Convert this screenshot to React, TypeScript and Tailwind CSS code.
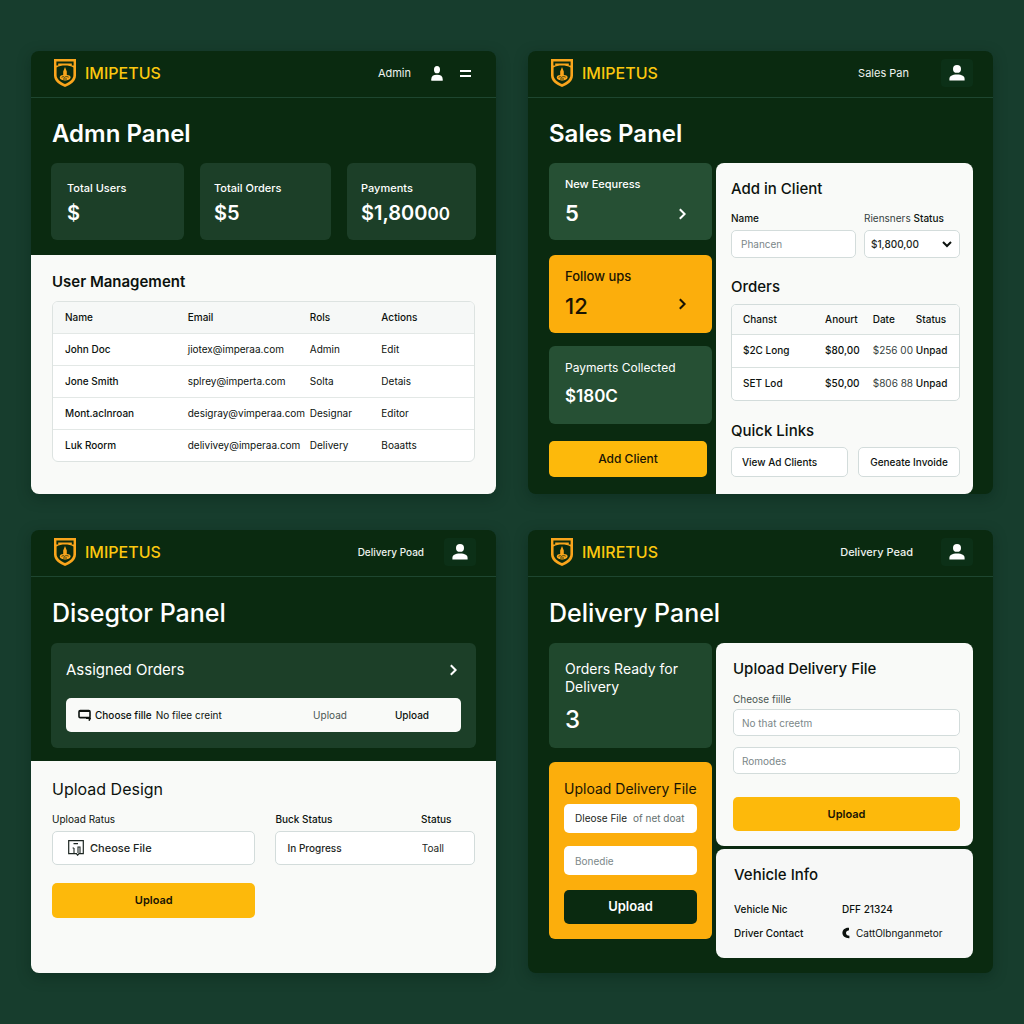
import React from "react";

const field =
  "w-full rounded-[5px] border border-[#d3dcdb] bg-white text-[10px] text-[#1c2622] placeholder:text-[#7b8789] outline-none";

function Shield() {
  return (
    <svg width="24" height="30" viewBox="0 0 24 30" aria-hidden="true">
      <path
        d="M1 1 H23 V17.5 C23 23 18 26.5 12 29 C6 26.5 1 23 1 17.5 Z"
        fill="#f9a51c"
      />
      <path
        d="M3.4 3.6 H20.6 V7.6 H18.8 V5.6 H5.2 V7.6 H3.4 Z"
        fill="#0a2a10"
      />
      <path
        d="M3.6 9.4 C8 7 16 7 20.4 9.4 V17 C20.4 21 17 23.8 12 26 C7 23.8 3.6 21 3.6 17 Z"
        fill="#0a2a10"
      />
      <path
        d="M12 9 L13.8 13.5 V17 C16.5 17 18 18.2 17.6 19.8 C17 22 14 22.6 11.6 22.4 C8.6 22.2 6.4 21 6.8 19 C7 17.8 8.4 17 10.2 17 V13.5 Z"
        fill="#f9a51c"
      />
      <path
        d="M8.6 19.4 C9.8 18.4 11 18.6 11.6 19.4 C12.4 18.4 14.6 18.4 15.6 19.2 M10 21 H14"
        fill="none"
        stroke="#0a2a10"
        strokeWidth="0.8"
      />
    </svg>
  );
}

function UserIcon({ small }: { small?: boolean }) {
  return (
    <svg
      className={small ? "h-[15px] w-3" : "h-4 w-4"}
      viewBox="0 0 16 16"
      preserveAspectRatio="none"
      fill="#fff"
      aria-hidden="true"
    >
      <ellipse cx="8" cy="3.9" rx="4" ry="3.9" />
      <path d="M0.4 15.6 V14 C0.4 11 3 9.4 8 9.4 S15.6 11 15.6 14 V15.6 Z" />
    </svg>
  );
}

function Chevron({ down }: { down?: boolean }) {
  return (
    <svg
      width="12"
      height="12"
      viewBox="0 0 12 12"
      fill="none"
      stroke="currentColor"
      strokeWidth="2"
      aria-hidden="true"
    >
      <path d={down ? "M2 4 L6 8 L10 4" : "M3.8 1.2 L8.6 6 L3.8 10.8"} />
    </svg>
  );
}

function Panel({
  brand = "IMIPETUS",
  user,
  title,
  titleStyle = "text-[24px] font-semibold",
  menu,
  children,
}: {
  brand?: string;
  user: React.ReactNode;
  title: string;
  titleStyle?: string;
  menu?: boolean;
  children: React.ReactNode;
}) {
  return (
    <section className="flex flex-col overflow-hidden rounded-lg bg-[#0a2a10] shadow-[0_4px_14px_rgba(4,30,18,0.35)]">
      <header className="flex h-[47px] items-center border-b border-[#1e4630] pb-[2px] pl-[22px] pr-5">
        <Shield />
        <span className="ml-2 text-[16px] font-medium text-[#fcc80f]">{brand}</span>
        <span className="ml-auto text-[11px] text-[#eef3ef]">{user}</span>
        {menu ? (
          <>
            <button aria-label="Account" className="ml-5">
              <UserIcon small />
            </button>
            <button aria-label="Menu" className="ml-[17px] mr-[5px] flex flex-col gap-[3px]">
              <span className="h-[2px] w-[11px] bg-white" />
              <span className="h-[2px] w-[11px] bg-white" />
            </button>
          </>
        ) : (
          <button
            aria-label="Account"
            className="ml-5 flex h-7 w-8 items-center justify-center rounded bg-[#0c3017]"
          >
            <UserIcon />
          </button>
        )}
      </header>
      <h1 className={`mt-5 px-[21px] leading-8 text-white ${titleStyle}`}>{title}</h1>
      {children}
    </section>
  );
}

const stats = [
  { label: "Total Users", value: "$", small: "" },
  { label: "Totail Orders", value: "$5", small: "" },
  { label: "Payments", value: "$1,800", small: "00" },
];

const users = [
  ["John Doc", "jiotex@imperaa.com", "Admin", "Edit"],
  ["Jone Smith", "splrey@imperta.com", "Solta", "Detais"],
  ["Mont.aclnroan", "desigray@vimperaa.com", "Designar", "Editor"],
  ["Luk Roorm", "delivivey@imperaa.com", "Delivery", "Boaatts"],
];

function AdminPanel() {
  return (
    <Panel user="Admin" title="Admn Panel" menu>
      <div className="mt-[13px] grid grid-cols-[133fr_131fr_129fr] gap-4 px-5">
        {stats.map((s) => (
          <div
            key={s.label}
            className="rounded-md bg-[#1c3f28] px-[14px] pb-[14px] pt-4 text-white first:px-4"
          >
            <div className="text-[11px] font-medium leading-[18px]">{s.label}</div>
            <div className="mt-1 text-[20px] font-semibold leading-6">
              {s.value}
              <span className="text-[17px]">{s.small}</span>
            </div>
          </div>
        ))}
      </div>
      <div className="mt-[15px] flex-1 bg-[#f9faf8] px-[21px] pb-8 pt-[15px] text-[#0c120e]">
        <h2 className="text-[15px] font-semibold leading-6">User Management</h2>
        <div className="mt-[7px] overflow-hidden rounded-md border border-[#dde3e1] bg-white">
          <table className="w-full table-fixed text-left text-[10px]">
            <colgroup>
              <col className="w-[32%]" />
              <col className="w-[29%]" />
              <col className="w-[17%]" />
              <col />
            </colgroup>
            <thead>
              <tr className="h-[31px] bg-[#f6f8f7]">
                {["Name", "Email", "Rols", "Actions"].map((h) => (
                  <th key={h} className="font-medium first:pl-3">
                    {h}
                  </th>
                ))}
              </tr>
            </thead>
            <tbody>
              {users.map((u) => (
                <tr key={u[0]} className="h-8 border-t border-[#e3e8e6]">
                  <td className="pl-3 font-medium">{u[0]}</td>
                  <td className="whitespace-nowrap">{u[1]}</td>
                  <td>{u[2]}</td>
                  <td>
                    <a href="#action">{u[3]}</a>
                  </td>
                </tr>
              ))}
            </tbody>
          </table>
        </div>
      </div>
    </Panel>
  );
}

function SalesPanel() {
  return (
    <Panel user={<span className="mr-3">Sales Pan</span>} title="Sales Panel">
      <div className="mt-[13px] grid flex-1 grid-cols-[163fr_257fr] gap-1 pl-[21px] pr-5">
        <div className="flex flex-col pb-4">
          <div className="flex h-[77px] items-center justify-between rounded-md bg-[#265034] pl-4 pr-6 text-white">
            <div>
              <div className="text-[11px] font-medium leading-[18px]">New Eequress</div>
              <div className="mt-1 text-[22px] font-semibold leading-8">5</div>
            </div>
            <button aria-label="Open requests" className="mt-6">
              <Chevron />
            </button>
          </div>
          <div className="mt-[15px] flex h-[78px] items-center justify-between rounded-md bg-[#fcae0c] pl-4 pr-6 text-[#191403]">
            <div>
              <div className="text-[13px] font-medium leading-5">Follow ups</div>
              <div className="mt-1 text-[22px] font-medium leading-8">12</div>
            </div>
            <button aria-label="Open follow ups" className="mt-5">
              <Chevron />
            </button>
          </div>
          <div className="mt-[13px] h-[78px] rounded-md bg-[#265034] px-4 pt-3 text-white">
            <div className="whitespace-nowrap text-[12px] leading-5">Paymerts Collected</div>
            <div className="mt-1 text-[17px] font-semibold leading-7">$180C</div>
          </div>
          <button className="mr-[5px] mt-[17px] h-9 rounded-[5px] bg-[#fdb90b] text-[12px] font-medium text-[#191403]">
            Add Client
          </button>
        </div>
        <div className="rounded-t-lg rounded-br-lg bg-[#f9faf8] pb-[17px] pl-[15px] pr-[13px] pt-4 text-[#0c120e]">
          <h2 className="text-[15px] font-medium leading-5">Add in Client</h2>
          <div className="mt-2 grid grid-cols-[125fr_96fr] gap-2">
            <div>
              <label htmlFor="client-name" className="block text-[10px] font-medium leading-[23px]">
                Name
              </label>
              <input id="client-name" placeholder="Phancen" className={`${field} block h-7 px-[9px]`} />
            </div>
            <div>
              <label
                htmlFor="client-status"
                className="block whitespace-nowrap text-[10px] leading-[23px] text-[#36423e]"
              >
                Riensners <span className="font-medium text-[#0c120e]">Status</span>
              </label>
              <div className="relative">
                <select
                  id="client-status"
                  className={`${field} block h-7 appearance-none pl-[6px] font-medium`}
                >
                  <option>$1,800,00</option>
                </select>
                <span className="pointer-events-none absolute right-[7px] top-2">
                  <Chevron down />
                </span>
              </div>
            </div>
          </div>
          <h2 className="mt-[19px] text-[15px] font-medium leading-5">Orders</h2>
          <div className="mt-[7px] overflow-hidden rounded-[5px] border border-[#d3dcdb] bg-white">
            <table className="w-full table-fixed whitespace-nowrap text-left text-[10px]">
              <colgroup>
                <col className="w-[41%]" />
                <col className="w-[21%]" />
                <col className="w-[19%]" />
                <col />
              </colgroup>
              <thead>
                <tr className="h-[29px] bg-[#f9faf9]">
                  <th className="pl-[11px] font-medium">Chanst</th>
                  <th className="font-medium">Anourt</th>
                  <th className="font-medium">Date</th>
                  <th className="font-medium">Status</th>
                </tr>
              </thead>
              <tbody>
                {[
                  ["$2C Long", "$80,00", "$256 00", "Unpad"],
                  ["SET Lod", "$50,00", "$806 88", "Unpad"],
                ].map((r) => (
                  <tr key={r[0]} className="h-[33px] border-t border-[#d9e1df] font-medium">
                    <td className="pl-[11px]">{r[0]}</td>
                    <td>{r[1]}</td>
                    <td className="font-normal text-[#36423e]">{r[2]}</td>
                    <td>{r[3]}</td>
                  </tr>
                ))}
              </tbody>
            </table>
          </div>
          <h2 className="mt-5 text-[15px] font-medium leading-5">Quick Links</h2>
          <div className="mt-[6px] grid grid-cols-[117fr_102fr] gap-[10px] text-[10px] font-medium">
            <a
              href="#clients"
              className="flex h-[30px] items-center whitespace-nowrap rounded-[5px] border border-[#d3dcdb] bg-white pl-[10px]"
            >
              View Ad Clients
            </a>
            <a
              href="#invoice"
              className="flex h-[30px] items-center justify-center whitespace-nowrap rounded-[5px] border border-[#d3dcdb] bg-white"
            >
              Geneate Invoide
            </a>
          </div>
        </div>
      </div>
    </Panel>
  );
}

function DesignerPanel() {
  return (
    <Panel
      user={<span className="text-[10px] font-medium">Delivery Poad</span>}
      title="Disegtor Panel"
      titleStyle="text-[25px] font-medium"
    >
      <div className="mx-5 mt-[14px] rounded-md bg-[#1c3f28] px-[15px] pb-4 pt-[15px]">
        <div className="flex items-center justify-between pr-[2px] text-white">
          <h2 className="text-[15px] leading-6">Assigned Orders</h2>
          <button aria-label="Open assigned orders">
            <Chevron />
          </button>
        </div>
        <div className="mt-4 flex h-[34px] items-center rounded-[5px] bg-[#f9faf8] pl-3 pr-8 text-[10px] text-[#0c120e]">
          <label htmlFor="order-file" className="flex items-center gap-1 font-medium">
            <svg width="13" height="12" viewBox="0 0 13 12" fill="none" stroke="#0c120e" aria-hidden="true">
              <rect x="1" y="1.6" width="11" height="7" rx="1.2" strokeWidth="1.6" />
              <path d="M1 2 H12" strokeWidth="2.2" />
              <path d="M8 9.2 H12.2 L11 11.6" strokeWidth="1.6" />
            </svg>
            Choose fille
            <input id="order-file" type="file" className="sr-only" />
          </label>
          <span className="ml-1">No filee creint</span>
          <button className="ml-auto text-[#4a5652]">Upload</button>
          <button className="ml-12 font-medium">Upload</button>
        </div>
      </div>
      <div className="mt-[13px] flex-1 bg-[#f9faf8] px-[21px] pb-12 pt-4 text-[#0c120e]">
        <h2 className="text-[16px] leading-6">Upload Design</h2>
        <div className="mt-[6px] grid grid-cols-[204fr_200fr] gap-5 text-[10px]">
          <div>
            <label htmlFor="design-file" className="block leading-6">
              Upload Ratus
            </label>
            <label
              htmlFor="design-file"
              className={`${field} flex h-[34px] items-center gap-[6px] pl-[15px] text-[11px] font-medium`}
            >
              <svg width="16" height="16" viewBox="0 0 16 16" fill="none" stroke="#1c2622" aria-hidden="true">
                <path d="M0.7 0.7 H15.3 V13.6 H11 L9.6 15.2 L8.4 13.6 H0.7 Z" strokeWidth="1.2" />
                <path d="M5.5 3.6 H10 M6 8 V13 M6 8 H4.6 M10 13 V7 H12 V13" strokeWidth="1.1" />
              </svg>
              Cheose File
            </label>
            <input id="design-file" type="file" className="sr-only" />
            <button className="mt-[18px] block h-[35px] w-full rounded-[5px] bg-[#fdb90b] text-[11px] font-semibold text-[#191403]">
              Upload
            </button>
          </div>
          <div>
            <div className="flex font-medium leading-6">
              <label htmlFor="buck-status" className="w-[73%]">
                Buck Status
              </label>
              <label htmlFor="status">Status</label>
            </div>
            <div className={`${field} flex h-[34px] pl-[11px]`}>
              <input
                id="buck-status"
                defaultValue="In Progress"
                className="w-[72%] min-w-0 font-medium outline-none"
              />
              <input id="status" defaultValue="Toall" className="w-[28%] min-w-0 outline-none" />
            </div>
          </div>
        </div>
      </div>
    </Panel>
  );
}

function DeliveryPanel() {
  return (
    <Panel
      brand="IMIRETUS"
      user={<span className="mr-2 font-medium">Delivery Pead</span>}
      title="Delivery Panel"
      titleStyle="text-[25px] font-medium"
    >
      <div className="mt-[14px] grid grid-cols-[163fr_257fr] items-start gap-1 pb-[15px] pl-[21px] pr-5">
        <div>
          <div className="rounded-md bg-[#20482d] px-4 pb-3 pt-[17px] text-white">
            <div className="text-[14px] leading-[18px]">Orders Ready for Delivery</div>
            <div className="mt-2 text-[24px] font-medium leading-8">3</div>
          </div>
          <div className="mt-[14px] rounded-md bg-[#fcae0c] px-[15px] pb-[15px] pt-[17px]">
            <h2 className="whitespace-nowrap text-[14px] leading-5 text-[#191403]">
              Upload Delivery File
            </h2>
            <label
              htmlFor="delivery-photo"
              className="mt-[5px] flex h-[29px] items-center gap-[6px] whitespace-nowrap rounded-[5px] bg-white pl-[11px] text-[10px] text-[#1c2622]"
            >
              Dleose File <span className="text-[#65716f]">of net doat</span>
              <input id="delivery-photo" type="file" className="sr-only" />
            </label>
            <input
              aria-label="Note"
              placeholder="Bonedie"
              className="mt-[13px] block h-[29px] w-full rounded-[5px] bg-white px-[11px] text-[10px] outline-none placeholder:text-[#7b8789]"
            />
            <button className="mt-[15px] block h-[34px] w-full rounded-[5px] bg-[#0a2a10] text-[13px] font-semibold text-white">
              Upload
            </button>
          </div>
        </div>
        <div className="flex flex-col gap-[3px] text-[#0c120e]">
          <div className="rounded-lg bg-[#f9faf8] pb-[15px] pl-[17px] pr-[13px] pt-4">
            <h2 className="text-[15px] font-medium leading-5">Upload Delivery File</h2>
            <label
              htmlFor="delivery-file"
              className="mt-[10px] block text-[10px] leading-5 text-[#4a5652]"
            >
              Cheose fiille
            </label>
            <input
              id="delivery-file"
              placeholder="No that creetm"
              className={`${field} block h-[27px] px-2`}
            />
            <input
              aria-label="Remarks"
              placeholder="Romodes"
              className={`${field} mt-[11px] block h-[27px] px-2`}
            />
            <button className="mt-[23px] block h-[34px] w-full rounded-[5px] bg-[#fdb90b] text-[11px] font-semibold text-[#191403]">
              Upload
            </button>
          </div>
          <div className="rounded-lg bg-[#f7f8f7] pb-[13px] pl-[18px] pr-[13px] pt-4">
            <h2 className="text-[15px] font-medium leading-5">Vehicle Info</h2>
            <dl className="mt-3 grid grid-cols-[108fr_118fr] whitespace-nowrap text-[10px] font-medium leading-6">
              <dt>Vehicle Nic</dt>
              <dd>DFF 21324</dd>
              <dt>Driver Contact</dt>
              <dd className="flex items-center gap-[6px] font-normal">
                <svg width="8" height="12" viewBox="0 0 8 12" aria-hidden="true">
                  <path
                    d="M7 0.8 C3 0.4 0.4 3 0.4 6 S3.4 11.4 7.4 11.2 L7.4 8.8 C5.2 8.6 4 7.6 4 6 S5 3.6 7 3.2 Z"
                    fill="#0c120e"
                  />
                </svg>
                CattOlbnganmetor
              </dd>
            </dl>
          </div>
        </div>
      </div>
    </Panel>
  );
}

export default function App() {
  return (
    <main className="min-h-screen bg-[#173d2d] px-[31px] py-[51px] font-['Inter',sans-serif]">
      <div className="grid grid-cols-2 gap-x-8 gap-y-9">
        <AdminPanel />
        <SalesPanel />
        <DesignerPanel />
        <DeliveryPanel />
      </div>
    </main>
  );
}
